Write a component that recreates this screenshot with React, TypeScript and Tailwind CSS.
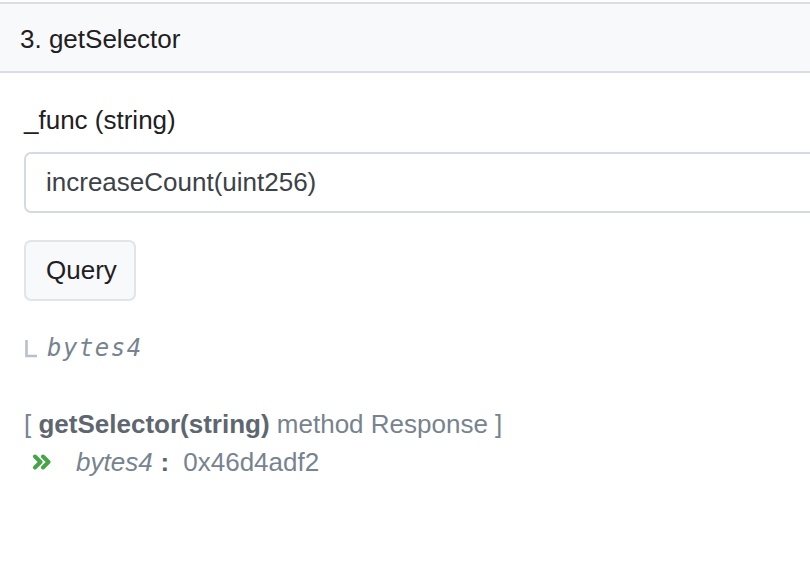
export default function App() {
  return (
    <div className="min-h-[568px] w-[810px] overflow-hidden bg-white font-['Liberation_Sans',Arial,sans-serif] text-[26px]">
      <div className="mt-[2px] border-y-2 border-[#dadde1] bg-[#f8f9fa]">
        <div className="flex h-[67px] items-center pl-[20px] pt-[3px] text-[#1e2022]">3. getSelector</div>
      </div>

      <div className="px-[24px] pt-[28px]">
        <label className="block leading-[39px] text-[#1e2022]">_func (string)</label>
        <div className="mt-[12px] -mr-[24px] flex h-[61px] items-center rounded-l-[7px] border-y-2 border-l-2 border-[#d5dae2] pl-[20px] text-[#3c4248]">
          increaseCount(uint256)
        </div>

        <button className="mt-[27px] flex h-[61px] items-center rounded-[7px] border-2 border-[#e1e4e8] bg-[#f8f9fa] pl-[20px] pr-[17px] text-[#1e2022]">
          Query
        </button>

        <div className="mt-[33px] flex h-[28px] items-center">
          <svg width="14" height="18" viewBox="0 0 14 18" className="mr-[9px] mt-[2px]">
            <path d="M2.5 0 V16 H13" fill="none" stroke="#b9c0c9" strokeWidth="2.6" />
          </svg>
          <span className="font-['DejaVu_Sans_Mono',monospace] text-[24px] italic tracking-[1.5px] text-[#77838f]">bytes4</span>
        </div>

        <div className="mt-[47px] leading-[30px] text-[#77838f]">
          [ <span className="font-bold text-[#5e6770]">getSelector(string)</span> method Response ]
        </div>
        <div className="mt-[8px] flex h-[30px] items-center text-[#77838f]">
          <svg width="20" height="16" viewBox="0 0 20 16" className="ml-[9px] mr-[23px]">
            <path d="M2 2.5 L7.5 8 L2 13.5 M10 2.5 L15.5 8 L10 13.5" fill="none" stroke="#47a447" strokeWidth="4" strokeLinecap="round" strokeLinejoin="round" />
          </svg>
          <span className="italic">bytes4</span>
          <span className="ml-[8px] mr-[14px] font-bold text-[#5e6770]">:</span>
          <span>0x46d4adf2</span>
        </div>
      </div>
    </div>
  );
}
